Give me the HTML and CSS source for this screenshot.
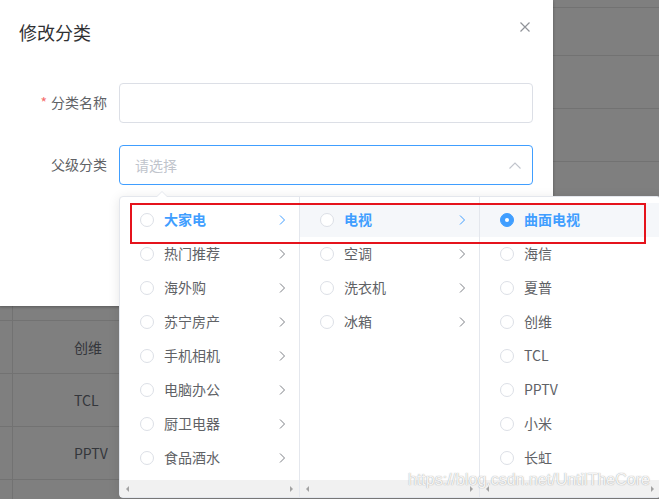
FILE: index.html
```html
<!DOCTYPE html>
<html lang="zh-CN">
<head>
<meta charset="utf-8">
<title>修改分类</title>
<link rel="stylesheet" href="styles.css">
</head>
<body>
<div class="screen">
  <div class="table">
    <div class="tr tr-a"><div class="gutter"></div><div class="td"></div></div>
    <div class="tr tr-b"><div class="gutter"></div><div class="td"></div></div>
    <div class="tr"><div class="gutter"></div><div class="td"></div></div>
    <div class="tr"><div class="gutter"></div><div class="td"></div></div>
    <div class="tr"><div class="gutter"></div><div class="td"></div></div>
    <div class="tr"><div class="gutter"></div><div class="td"></div></div>
    <div class="tr"><div class="gutter"></div><div class="td"></div></div>
    <div class="tr"><div class="gutter"></div><div class="td">创维</div></div>
    <div class="tr"><div class="gutter"></div><div class="td">TCL</div></div>
    <div class="tr"><div class="gutter"></div><div class="td">PPTV</div></div>
    <div class="tr tr-last"><div class="gutter"></div><div class="td"></div></div>
  </div>

  <div class="dialog">
    <div class="dlg-header">
      <span class="dlg-title">修改分类</span>
      <svg class="dlg-close" width="10" height="10" viewBox="0 0 10 10"><path d="M0.5 0.5 L9.5 9.5 M9.5 0.5 L0.5 9.5" stroke="#909399" stroke-width="1.2" fill="none"/></svg>
    </div>
    <div class="dlg-body">
      <div class="form-item">
        <label class="form-label"><span class="req">*</span>分类名称</label>
        <div class="input"></div>
      </div>
      <div class="form-item">
        <label class="form-label">父级分类</label>
        <div class="input focus">
          <span class="placeholder">请选择</span>
          <svg class="caret" width="12" height="7" viewBox="0 0 12 7"><path d="M0.5 6.5 L6 1 L11.5 6.5" stroke="#c0c4cc" stroke-width="1.1" fill="none"/></svg>
        </div>
      </div>
    </div>
  </div>

  <div class="cascader">
    <span class="pop-arrow"></span>
    <div class="menu">
      <ul class="menu-list">
        <li class="node active"><span class="radio"></span><span class="label">大家电</span><svg class="arrow" width="14" height="14" viewBox="0 0 14 14"><path d="M5 2.5 L9.5 7 L5 11.5" fill="none" stroke="currentColor" stroke-width="1"/></svg></li>
        <li class="node"><span class="radio"></span><span class="label">热门推荐</span><svg class="arrow" width="14" height="14" viewBox="0 0 14 14"><path d="M5 2.5 L9.5 7 L5 11.5" fill="none" stroke="currentColor" stroke-width="1"/></svg></li>
        <li class="node"><span class="radio"></span><span class="label">海外购</span><svg class="arrow" width="14" height="14" viewBox="0 0 14 14"><path d="M5 2.5 L9.5 7 L5 11.5" fill="none" stroke="currentColor" stroke-width="1"/></svg></li>
        <li class="node"><span class="radio"></span><span class="label">苏宁房产</span><svg class="arrow" width="14" height="14" viewBox="0 0 14 14"><path d="M5 2.5 L9.5 7 L5 11.5" fill="none" stroke="currentColor" stroke-width="1"/></svg></li>
        <li class="node"><span class="radio"></span><span class="label">手机相机</span><svg class="arrow" width="14" height="14" viewBox="0 0 14 14"><path d="M5 2.5 L9.5 7 L5 11.5" fill="none" stroke="currentColor" stroke-width="1"/></svg></li>
        <li class="node"><span class="radio"></span><span class="label">电脑办公</span><svg class="arrow" width="14" height="14" viewBox="0 0 14 14"><path d="M5 2.5 L9.5 7 L5 11.5" fill="none" stroke="currentColor" stroke-width="1"/></svg></li>
        <li class="node"><span class="radio"></span><span class="label">厨卫电器</span><svg class="arrow" width="14" height="14" viewBox="0 0 14 14"><path d="M5 2.5 L9.5 7 L5 11.5" fill="none" stroke="currentColor" stroke-width="1"/></svg></li>
        <li class="node"><span class="radio"></span><span class="label">食品酒水</span><svg class="arrow" width="14" height="14" viewBox="0 0 14 14"><path d="M5 2.5 L9.5 7 L5 11.5" fill="none" stroke="currentColor" stroke-width="1"/></svg></li>
      </ul>
      <div class="scrollbar"><span class="sb-btn"><span class="tri-l"></span></span><span class="sb-btn"><span class="tri-r"></span></span></div>
    </div>
    <div class="menu">
      <ul class="menu-list">
        <li class="node active hover"><span class="radio"></span><span class="label">电视</span><svg class="arrow" width="14" height="14" viewBox="0 0 14 14"><path d="M5 2.5 L9.5 7 L5 11.5" fill="none" stroke="currentColor" stroke-width="1"/></svg></li>
        <li class="node"><span class="radio"></span><span class="label">空调</span><svg class="arrow" width="14" height="14" viewBox="0 0 14 14"><path d="M5 2.5 L9.5 7 L5 11.5" fill="none" stroke="currentColor" stroke-width="1"/></svg></li>
        <li class="node"><span class="radio"></span><span class="label">洗衣机</span><svg class="arrow" width="14" height="14" viewBox="0 0 14 14"><path d="M5 2.5 L9.5 7 L5 11.5" fill="none" stroke="currentColor" stroke-width="1"/></svg></li>
        <li class="node"><span class="radio"></span><span class="label">冰箱</span><svg class="arrow" width="14" height="14" viewBox="0 0 14 14"><path d="M5 2.5 L9.5 7 L5 11.5" fill="none" stroke="currentColor" stroke-width="1"/></svg></li>
      </ul>
      <div class="scrollbar"><span class="sb-btn"><span class="tri-l"></span></span><span class="sb-btn"><span class="tri-r"></span></span></div>
    </div>
    <div class="menu">
      <ul class="menu-list">
        <li class="node active hover"><span class="radio checked"></span><span class="label">曲面电视</span></li>
        <li class="node"><span class="radio"></span><span class="label">海信</span></li>
        <li class="node"><span class="radio"></span><span class="label">夏普</span></li>
        <li class="node"><span class="radio"></span><span class="label">创维</span></li>
        <li class="node"><span class="radio"></span><span class="label">TCL</span></li>
        <li class="node"><span class="radio"></span><span class="label">PPTV</span></li>
        <li class="node"><span class="radio"></span><span class="label">小米</span></li>
        <li class="node"><span class="radio"></span><span class="label">长虹</span></li>
      </ul>
      <div class="scrollbar"><span class="sb-btn"><span class="tri-l"></span></span><span class="sb-btn"><span class="tri-r"></span></span></div>
    </div>
  </div>

  <div class="annot"></div>
  <div class="watermark">https://blog.csdn.net/UntilTheCore</div>
</div>
</body>
</html>
```

FILE: styles.css
```css
html, body {
  margin: 0;
  padding: 0;
  overflow: hidden;
}

body {
  font-family: "Noto Sans CJK SC", "Noto Sans", sans-serif;
  font-size: 14px;
  background: #7f7f7f;
}

.screen {
  position: relative;
  width: 659px;
  height: 499px;
  overflow: hidden;
  background: #7f7f7f;
}

/* background table under the overlay */
.table {
  display: flex;
  flex-direction: column;
}

.tr {
  display: flex;
  height: 53px;
  box-sizing: border-box;
  border-bottom: 1px solid #727272;
}

.tr-a { height: 8px; }
.tr-b { height: 48px; }
.tr-last { border-bottom: none; }

.gutter {
  width: 13px;
  box-sizing: border-box;
  border-right: 1px solid #727272;
}

.td {
  flex: 1;
  display: flex;
  align-items: center;
  padding-left: 61px;
  padding-bottom: 1px;
  color: #34363b;
  font-size: 14px;
}

/* dialog */
.dialog {
  position: absolute;
  left: -1px;
  top: 0;
  width: 554px;
  height: 306px;
  background: #fff;
  box-shadow: 0 1px 3px rgba(0, 0, 0, 0.3);
  box-sizing: border-box;
}

.dlg-header {
  display: flex;
  justify-content: space-between;
  align-items: flex-start;
  padding: 20px 23px 10px 20px;
}

.dlg-title {
  font-size: 18px;
  line-height: 24px;
  color: #303133;
}

.dlg-close {
  margin-top: 2px;
}

.dlg-body {
  padding: 29px 20px 30px;
}

.form-item {
  display: flex;
  margin-bottom: 22px;
}

.form-label {
  width: 100px;
  box-sizing: border-box;
  padding-right: 12px;
  text-align: right;
  line-height: 39px;
  font-size: 14px;
  color: #606266;
}

.req {
  color: #f56c6c;
  margin-right: 4px;
}

.input {
  flex: 1;
  height: 40px;
  box-sizing: border-box;
  border: 1px solid #dcdfe6;
  border-radius: 4px;
  display: flex;
  align-items: center;
  padding: 0 11px 0 15px;
  color: #c0c4cc;
  font-size: 14px;
}

.input.focus {
  border-color: #409eff;
}

.placeholder {
  flex: 1;
  line-height: 37px;
}

/* cascader dropdown */
.cascader {
  position: absolute;
  left: 119px;
  top: 196px;
  display: flex;
  background: #fff;
  border: 1px solid #e4e7ed;
  border-radius: 4px;
  box-shadow: 0 2px 12px rgba(0, 0, 0, 0.1);
}

.pop-arrow {
  position: absolute;
  left: 36px;
  top: -6px;
  width: 0;
  height: 0;
  border-left: 6px solid transparent;
  border-right: 6px solid transparent;
  border-bottom: 6px solid #e4e7ed;
}

.pop-arrow::after {
  content: "";
  position: absolute;
  left: -5px;
  top: 1px;
  border-left: 5px solid transparent;
  border-right: 5px solid transparent;
  border-bottom: 5px solid #fff;
}

.menu {
  width: 180px;
  height: 300px;
  box-sizing: border-box;
  border-right: 1px solid #e4e7ed;
  display: flex;
  flex-direction: column;
}

.menu:last-child {
  border-right: none;
}

.menu-list {
  list-style: none;
  margin: 0;
  padding: 6px 0 0;
  flex: 1;
}

.node {
  height: 34px;
  display: flex;
  align-items: center;
  padding: 0 10px 0 20px;
  font-size: 14px;
  color: #606266;
}

.node.hover {
  background: #f5f7fa;
}

.node.active {
  color: #409eff;
  font-weight: 700;
}

.radio {
  flex: none;
  width: 14px;
  height: 14px;
  box-sizing: border-box;
  border: 1px solid #dcdfe6;
  border-radius: 50%;
  background: #fff;
  display: flex;
  align-items: center;
  justify-content: center;
}

.radio.checked {
  background: #409eff;
  border-color: #409eff;
}

.radio.checked::after {
  content: "";
  width: 4px;
  height: 4px;
  border-radius: 50%;
  background: #fff;
}

.label {
  flex: 1;
  padding: 0 10px;
  line-height: 32px;
  padding-bottom: 2px;
}

.arrow {
  flex: none;
  color: #7d8086;
}

.node.active .arrow {
  color: #409eff;
}

.scrollbar {
  height: 17px;
  background: #f1f1f1;
  display: flex;
  justify-content: space-between;
}

.sb-btn {
  width: 15px;
  display: flex;
  align-items: center;
  justify-content: center;
}

.tri-l {
  width: 0;
  height: 0;
  border-top: 3px solid transparent;
  border-bottom: 3px solid transparent;
  border-right: 3px solid #a3a3a3;
}

.tri-r {
  width: 0;
  height: 0;
  border-top: 3px solid transparent;
  border-bottom: 3px solid transparent;
  border-left: 3px solid #a3a3a3;
}

/* red annotation box */
.annot {
  position: absolute;
  left: 130px;
  top: 203px;
  width: 516px;
  height: 41px;
  box-sizing: border-box;
  border: 2px solid #e5131c;
}

.watermark {
  position: absolute;
  left: 408px;
  top: 470px;
  font-family: "Liberation Sans", Arial, sans-serif;
  font-size: 16px;
  line-height: 20px;
  color: rgba(255, 255, 255, 0.9);
  text-shadow: 0 0 1px rgba(140, 140, 140, 0.55), 0 0 1px rgba(140, 140, 140, 0.55);
  white-space: nowrap;
}
```
